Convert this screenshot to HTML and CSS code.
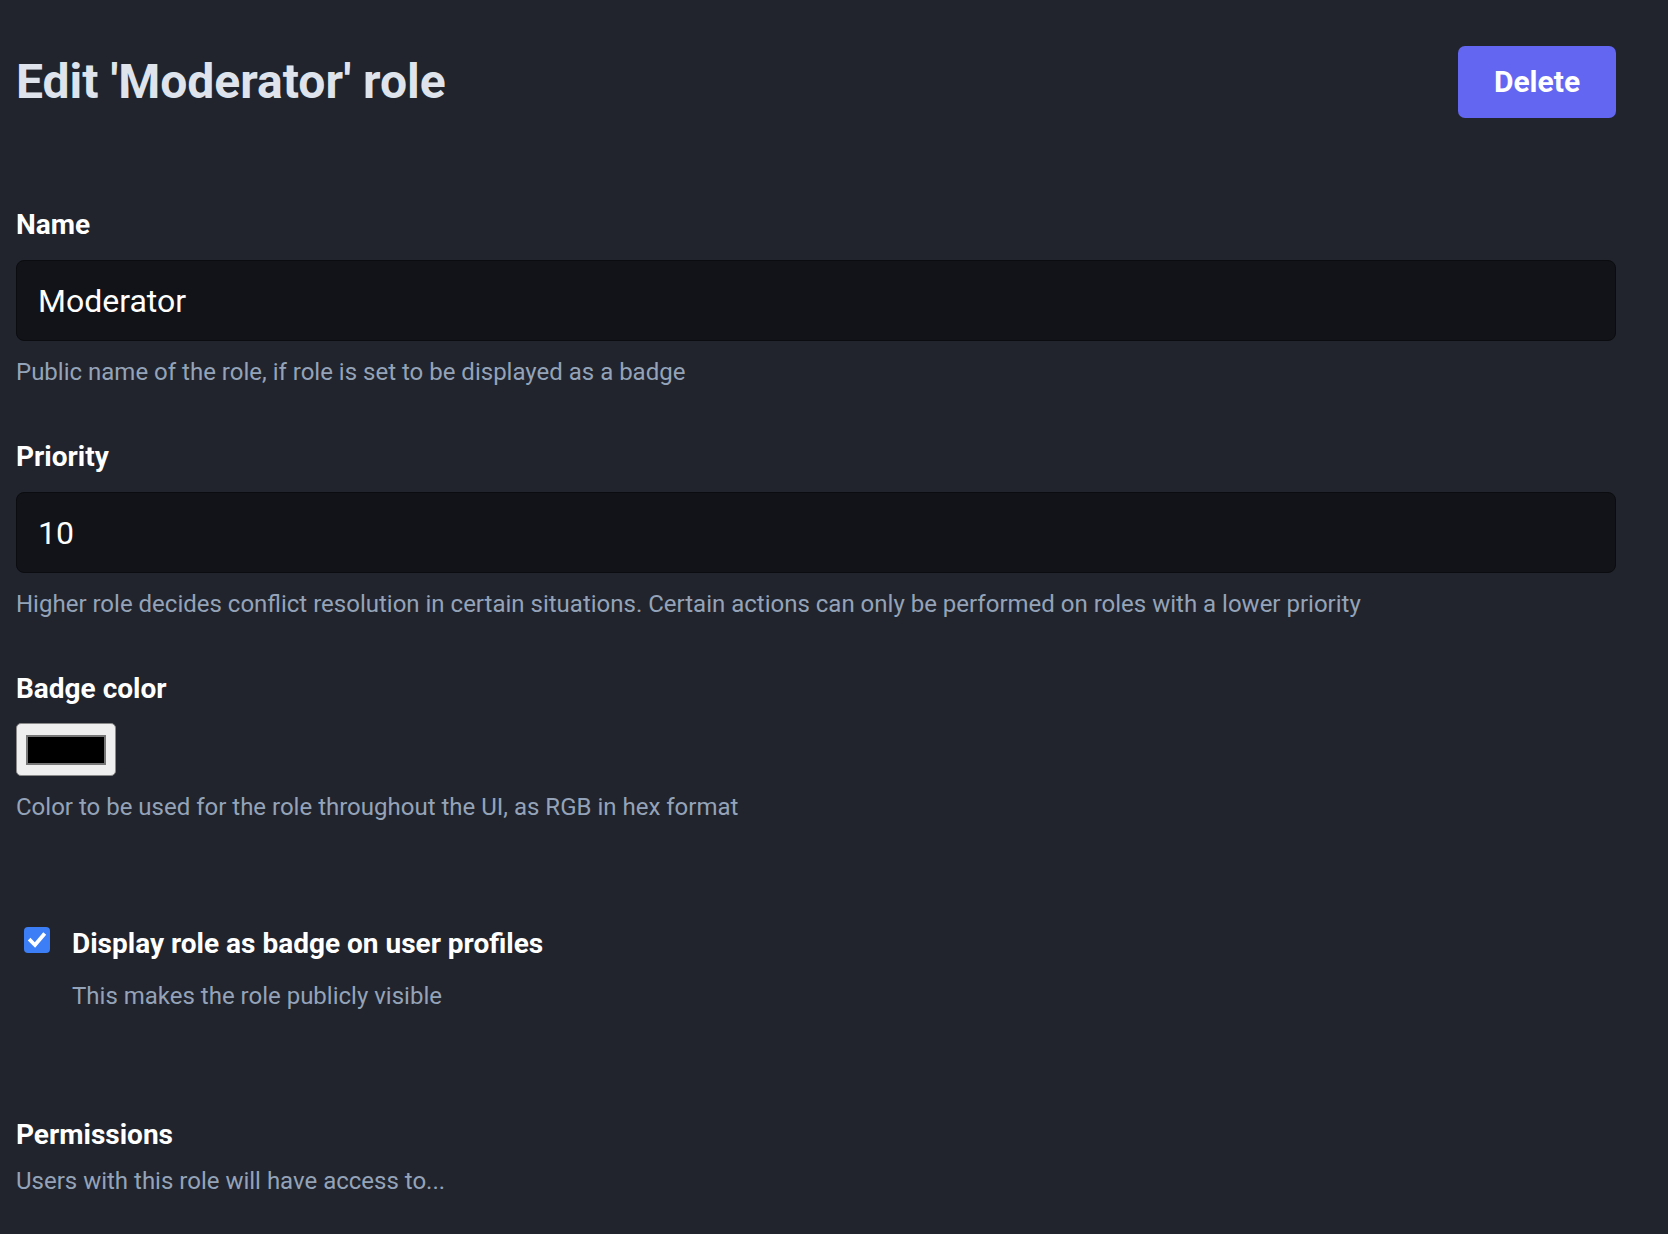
FILE: index.html
```html
<!DOCTYPE html>
<html lang="en">
<head>
<meta charset="utf-8">
<title>Edit role</title>
<link rel="stylesheet" href="styles.css">
</head>
<body>
<main class="page">
  <header class="header">
    <h1 class="title">Edit 'Moderator' role</h1>
    <button class="btn-delete" type="button">Delete</button>
  </header>

  <section class="field field-first">
    <label class="label">Name</label>
    <div class="input">Moderator</div>
    <p class="help help-input">Public name of the role, if role is set to be displayed as a badge</p>
  </section>

  <section class="field">
    <label class="label">Priority</label>
    <div class="input">10</div>
    <p class="help help-input">Higher role decides conflict resolution in certain situations. Certain actions can only be performed on roles with a lower priority</p>
  </section>

  <section class="field field-color">
    <label class="label">Badge color</label>
    <div class="color-input"><div class="swatch"></div></div>
    <p class="help help-color">Color to be used for the role throughout the UI, as RGB in hex format</p>
  </section>

  <section class="check-field">
    <div class="check-row">
      <span class="checkbox">
        <svg viewBox="0 0 26 26" width="26" height="26"><path d="M6.5 13.5 L11 18 L19.5 8" fill="none" stroke="#fff" stroke-width="3.8" stroke-linecap="square" stroke-linejoin="miter"/></svg>
      </span>
      <span class="check-label">Display role as badge on user profiles</span>
    </div>
    <p class="help help-check">This makes the role publicly visible</p>
  </section>

  <section class="perm">
    <h2 class="label">Permissions</h2>
    <p class="help help-perm">Users with this role will have access to...</p>
  </section>
</main>
</body>
</html>
```

FILE: styles.css
```css
html, body {
  margin: 0;
  padding: 0;
  background: #21242d;
}
body {
  font-family: Roboto, "Noto Sans", "Liberation Sans", sans-serif;
  color: #ffffff;
  height: 1234px;
  overflow: hidden;
}
.page {
  width: 1600px;
  margin-left: 16px;
  padding-top: 46px;
}
.header {
  display: flex;
  align-items: center;
  justify-content: space-between;
  height: 72px;
}
.title {
  margin: 0;
  font-size: 48px;
  line-height: 60px;
  font-weight: 700;
  color: #dfe4ec;
}
.btn-delete {
  width: 158px;
  height: 72px;
  border: none;
  border-radius: 7px;
  background: #6366f1;
  color: #ffffff;
  font-family: inherit;
  font-size: 30px;
  font-weight: 700;
  padding: 0 0 2px 0;
}
.field {
  margin-top: 51px;
  display: flex;
  flex-direction: column;
}
.field-first {
  margin-top: 89px;
}
.field-color {
  margin-top: 51px;
}
.label {
  display: block;
  margin: 0;
  font-size: 28px;
  line-height: 36px;
  font-weight: 700;
  color: #ffffff;
}
.input {
  box-sizing: border-box;
  margin-top: 17px;
  height: 81px;
  display: flex;
  align-items: center;
  padding-left: 21px;
  background: #121318;
  border: 1.5px solid #0b0c0f;
  border-radius: 8px;
  font-size: 32px;
  color: #ffffff;
}
.help {
  margin: 0;
  font-size: 24px;
  line-height: 32px;
  color: #94a3b8;
}
.help-input {
  margin-top: 15px;
}
.color-input {
  box-sizing: border-box;
  margin-top: 16px;
  width: 100px;
  height: 53px;
  padding: 11px 9px 10px 9px;
  background: #efefef;
  border: 1px solid #8a8a8a;
  border-radius: 5px;
}
.swatch {
  box-sizing: border-box;
  width: 100%;
  height: 100%;
  background: #000;
  border: 2px solid #777;
}
.help-color {
  margin-top: 15px;
}
.check-field {
  margin-top: 103px;
}
.check-row {
  display: flex;
  align-items: flex-start;
}
.checkbox {
  width: 26px;
  height: 26px;
  margin: 1px 22px 0 8px;
  border-radius: 4px;
  background: #3b7ef5;
  display: flex;
  flex-shrink: 0;
}
.check-label {
  font-size: 28px;
  line-height: 36px;
  font-weight: 700;
}
.help-check {
  margin-top: 18px;
  padding-left: 56px;
}
.perm {
  margin-top: 105px;
}
.help-perm {
  margin-top: 12px;
}
```
